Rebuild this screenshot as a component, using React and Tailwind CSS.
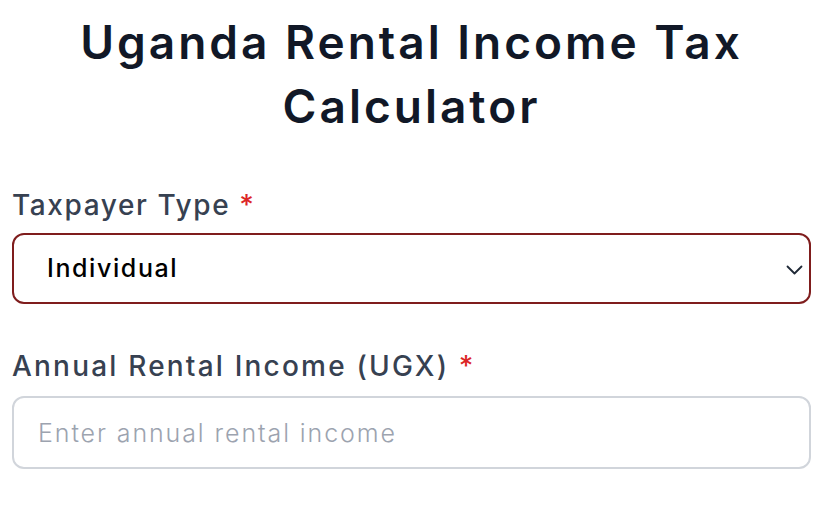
import { useState } from 'react';

export default function App() {
  const [type, setType] = useState('individual');
  const [income, setIncome] = useState('');

  return (
    <div
      className="w-full bg-white pl-[12px] pr-[5px] pt-[10px]"
      style={{ fontFamily: 'Inter, "Noto Sans", sans-serif' }}
    >
      <h1 className="text-center text-[46px] leading-[64px] font-semibold text-[#111827] tracking-[3px]">
        Uganda Rental Income Tax
        <br />
        Calculator
      </h1>

      <div className="mt-[47px]">
        <label className="block text-[28px] leading-[40px] font-medium text-[#374151] tracking-[1.6px]">
          Taxpayer Type <span className="text-[#dc2626]">*</span>
        </label>
        <div className="relative mt-[8px]">
          <select
            value={type}
            onChange={(e) => setType(e.target.value)}
            className="block h-[71px] w-full appearance-none rounded-[12px] border-2 border-[#7f1d1d] bg-white pl-[33px] pr-[50px] text-[25px] font-medium tracking-[1.6px] text-black outline-none"
          >
            <option value="individual">Individual</option>
            <option value="company">Company</option>
          </select>
          <svg
            className="pointer-events-none absolute right-[8px] top-[32px]"
            width="17"
            height="10"
            viewBox="0 0 17 10"
            fill="none"
          >
            <path d="M1.5 1.5l7 7 7-7" stroke="#1f2937" strokeWidth="1.8" strokeLinecap="round" strokeLinejoin="round" />
          </svg>
        </div>
      </div>

      <div className="mt-[42px]">
        <label className="block text-[28px] leading-[40px] font-medium text-[#374151] tracking-[2.2px]">
          Annual Rental Income (UGX) <span className="text-[#dc2626]">*</span>
        </label>
        <input
          type="text"
          value={income}
          onChange={(e) => setIncome(e.target.value)}
          placeholder="Enter annual rental income"
          className="mt-[10px] block h-[73px] w-full rounded-[12px] border-2 border-[#d1d5db] bg-white px-[24px] text-[25px] font-light tracking-[1.9px] text-black outline-none placeholder:text-[#9ca3af]"
        />
      </div>
    </div>
  );
}
